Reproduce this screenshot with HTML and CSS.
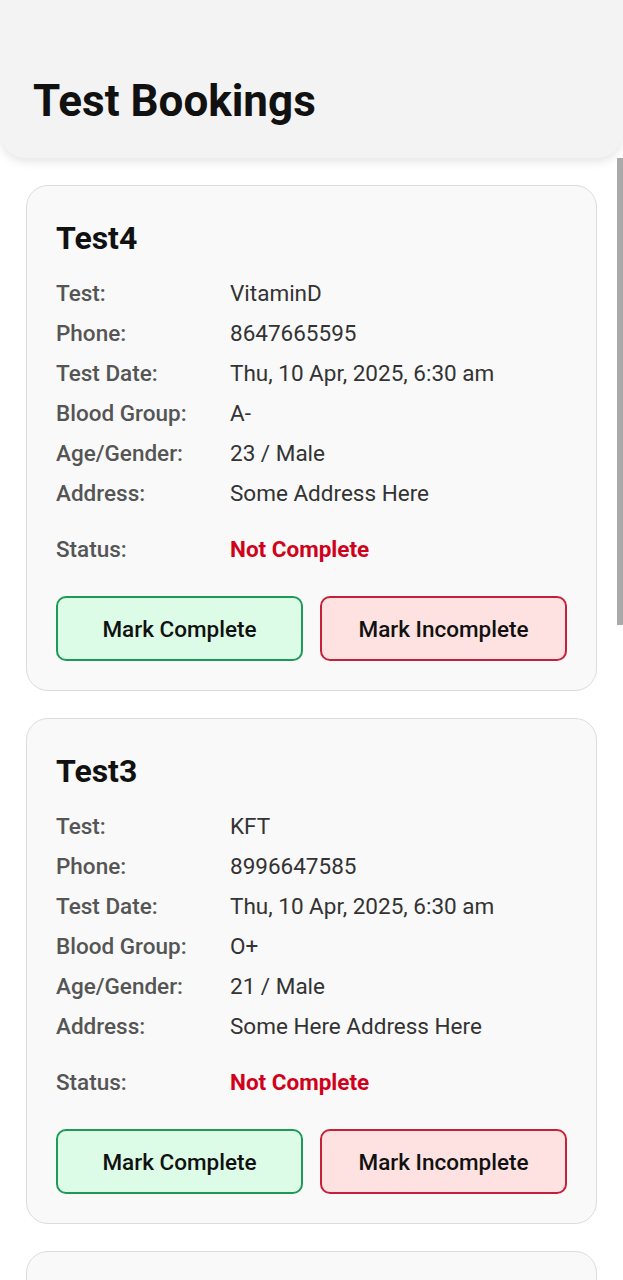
FILE: index.html
```html
<!DOCTYPE html>
<html lang="en">
<head>
<meta charset="utf-8">
<title>Test Bookings</title>
<link rel="stylesheet" href="styles.css">
</head>
<body>
<header class="header">
  <h1 class="header-title">Test Bookings</h1>
</header>
<main class="list">
  <section class="card">
    <h2 class="card-title">Test4</h2>
    <div class="rows">
      <div class="row"><span class="label">Test:</span><span class="value">VitaminD</span></div>
      <div class="row"><span class="label">Phone:</span><span class="value">8647665595</span></div>
      <div class="row"><span class="label">Test Date:</span><span class="value">Thu, 10 Apr, 2025, 6:30 am</span></div>
      <div class="row"><span class="label">Blood Group:</span><span class="value">A-</span></div>
      <div class="row"><span class="label">Age/Gender:</span><span class="value">23 / Male</span></div>
      <div class="row"><span class="label">Address:</span><span class="value">Some Address Here</span></div>
    </div>
    <div class="row status-row"><span class="label">Status:</span><span class="value status-bad">Not Complete</span></div>
    <div class="actions">
      <button class="btn btn-complete">Mark Complete</button>
      <button class="btn btn-incomplete">Mark Incomplete</button>
    </div>
  </section>
  <section class="card">
    <h2 class="card-title">Test3</h2>
    <div class="rows">
      <div class="row"><span class="label">Test:</span><span class="value">KFT</span></div>
      <div class="row"><span class="label">Phone:</span><span class="value">8996647585</span></div>
      <div class="row"><span class="label">Test Date:</span><span class="value">Thu, 10 Apr, 2025, 6:30 am</span></div>
      <div class="row"><span class="label">Blood Group:</span><span class="value">O+</span></div>
      <div class="row"><span class="label">Age/Gender:</span><span class="value">21 / Male</span></div>
      <div class="row"><span class="label">Address:</span><span class="value">Some Here Address Here</span></div>
    </div>
    <div class="row status-row"><span class="label">Status:</span><span class="value status-bad">Not Complete</span></div>
    <div class="actions">
      <button class="btn btn-complete">Mark Complete</button>
      <button class="btn btn-incomplete">Mark Incomplete</button>
    </div>
  </section>
  <section class="card card-peek"></section>
</main>
<div class="scrollbar"></div>
</body>
</html>
```
FILE: styles.css
```css
* { box-sizing: border-box; }
html, body {
  margin: 0;
  padding: 0;
  background: #ffffff;
  font-family: Roboto, "Noto Sans", Arial, sans-serif;
  color: #111;
}
.header {
  height: 158px;
  background: #f3f3f3;
  border-radius: 0 0 26px 26px;
  box-shadow: 0 4px 10px rgba(0,0,0,0.10);
  padding: 74px 33px 0;
}
.header-title {
  margin: 0;
  font-size: 44px;
  line-height: 54px;
  font-weight: 700;
  color: #111;
}
.list {
  padding: 27px 26px 40px;
  display: flex;
  flex-direction: column;
  gap: 27px;
}
.card {
  background: #f9f9f9;
  border: 1px solid #dcdcdc;
  border-radius: 22px;
  padding: 33px 29px 29px;
}
.card-peek { height: 120px; }
.card-title {
  margin: 0 0 16px;
  font-size: 32px;
  line-height: 38px;
  font-weight: 700;
  color: #111;
}
.rows {
  display: flex;
  flex-direction: column;
}
.row {
  display: flex;
  height: 40px;
  align-items: center;
  font-size: 22.5px;
}
.label {
  width: 174px;
  flex-shrink: 0;
  color: #555;
  font-weight: 500;
}
.value {
  color: #333;
  font-weight: 400;
}
.status-row { margin-top: 16px; }
.status-bad {
  color: #d0021b;
  font-weight: 700;
}
.actions {
  display: grid;
  grid-template-columns: 1fr 1fr;
  gap: 17px;
  margin-top: 27px;
}
.btn {
  height: 65px;
  border-radius: 10px;
  font-family: inherit;
  font-size: 22.5px;
  font-weight: 500;
  color: #111;
  cursor: pointer;
}
.btn-complete {
  background: #dcfce7;
  border: 2px solid #1e9a57;
}
.btn-incomplete {
  background: #fee2e2;
  border: 2px solid #c5203a;
}
.scrollbar {
  position: fixed;
  top: 158px;
  right: 0;
  width: 6px;
  height: 467px;
  background: #aaaaaa;
}
```
